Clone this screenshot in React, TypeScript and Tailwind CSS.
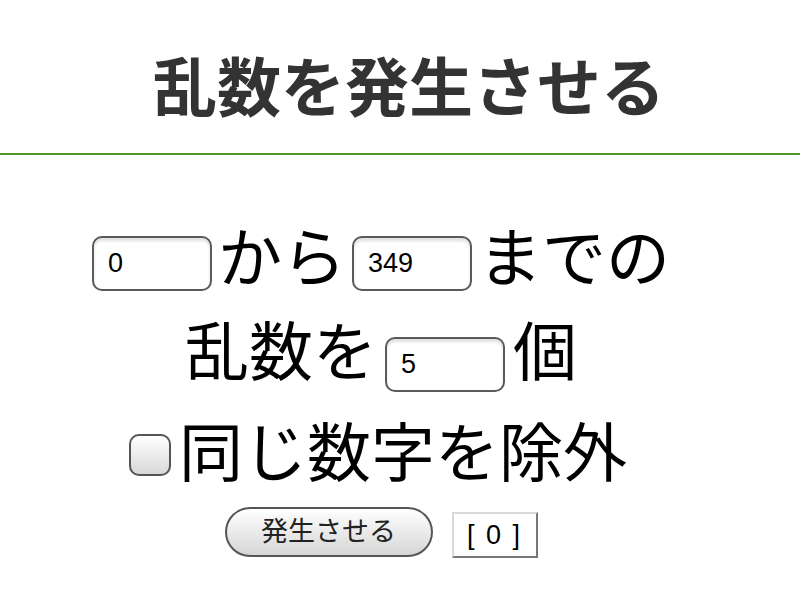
import React, { useState } from "react"

const serif = { fontFamily: '"Liberation Serif", "Noto Sans CJK JP", serif' }

export default function App() {
  const [min, setmin] = useState("0")
  const [max, setmax] = useState("349")
  const [count, setcount] = useState("5")
  const [uniq, setuniq] = useState(false)
  const [result, setresult] = useState<number[]>([0])

  const generate = () => {
    const lo = parseInt(min) || 0
    const hi = parseInt(max) || 0
    const n = parseInt(count) || 0
    const out: number[] = []
    for (let i = 0; i < n; i++) {
      let v = lo + Math.floor(Math.random() * (hi - lo + 1))
      if (uniq && out.includes(v) && out.length < hi - lo + 1) { i--; continue }
      out.push(v)
    }
    setresult(out)
  }

  const inputCls =
    "w-[120px] h-[55px] rounded-[10px] border-2 border-[#5a5a5a] bg-white px-[14px] text-[27px] text-black outline-none shadow-[inset_0_3px_3px_rgba(0,0,0,0.12)] font-['Liberation_Sans',sans-serif]"

  return (
    <div className="min-h-screen bg-white text-black" style={serif}>
      <div className="h-[155px] pt-[27px] pl-[18px] flex items-center justify-center border-b-[2px] border-[#4a9a2e]">
        <h1 className="text-[64px] font-bold text-[#333] leading-none">乱数を発生させる</h1>
      </div>

      <div className="mt-[60px] pr-[38px] text-[64px] leading-none">
        <div className="h-[96px] flex items-center justify-center gap-[6px]">
          <input className={inputCls} value={min} onChange={(e) => setmin(e.target.value)} />
          <span className="mb-[6px]">から</span>
          <input className={inputCls} value={max} onChange={(e) => setmax(e.target.value)} />
          <span className="mb-[6px]">までの</span>
        </div>
        <div className="h-[96px] flex items-center justify-center gap-[8px]">
          <span className="mb-[10px]">乱数を</span>
          <input className={inputCls + " mt-[10px]"} value={count} onChange={(e) => setcount(e.target.value)} />
          <span className="mb-[10px]">個</span>
        </div>
        <div className="h-[96px] flex items-center justify-center gap-[8px] pr-[6px]">
          <button
            onClick={() => setuniq(!uniq)}
            className="w-[42px] h-[42px] rounded-[10px] border-2 border-[#555] bg-gradient-to-b from-white to-[#d8d8d8] flex items-center justify-center text-[28px] leading-none"
          >
            {uniq ? "✓" : ""}
          </button>
          <span>同じ数字を除外</span>
        </div>
        <div className="h-[58px] flex items-center justify-center gap-[19px] font-['Liberation_Sans','Noto_Sans_CJK_JP',sans-serif]">
          <button
            onClick={generate}
            className="w-[208px] h-[50px] rounded-full border-2 border-[#555] bg-gradient-to-b from-white to-[#d6d6d6] text-[27px] text-[#222] flex items-center justify-center"
          >
            発生させる
          </button>
          <div className="min-w-[86px] h-[46px] mt-[6px] px-[12px] border-2 border-t-[#d9d9d9] border-l-[#d9d9d9] border-r-[#777] border-b-[#777] bg-white text-[27px] tracking-[2px] flex items-center justify-center">
            [ {result.join(", ")} ]
          </div>
        </div>
      </div>
    </div>
  )
}
